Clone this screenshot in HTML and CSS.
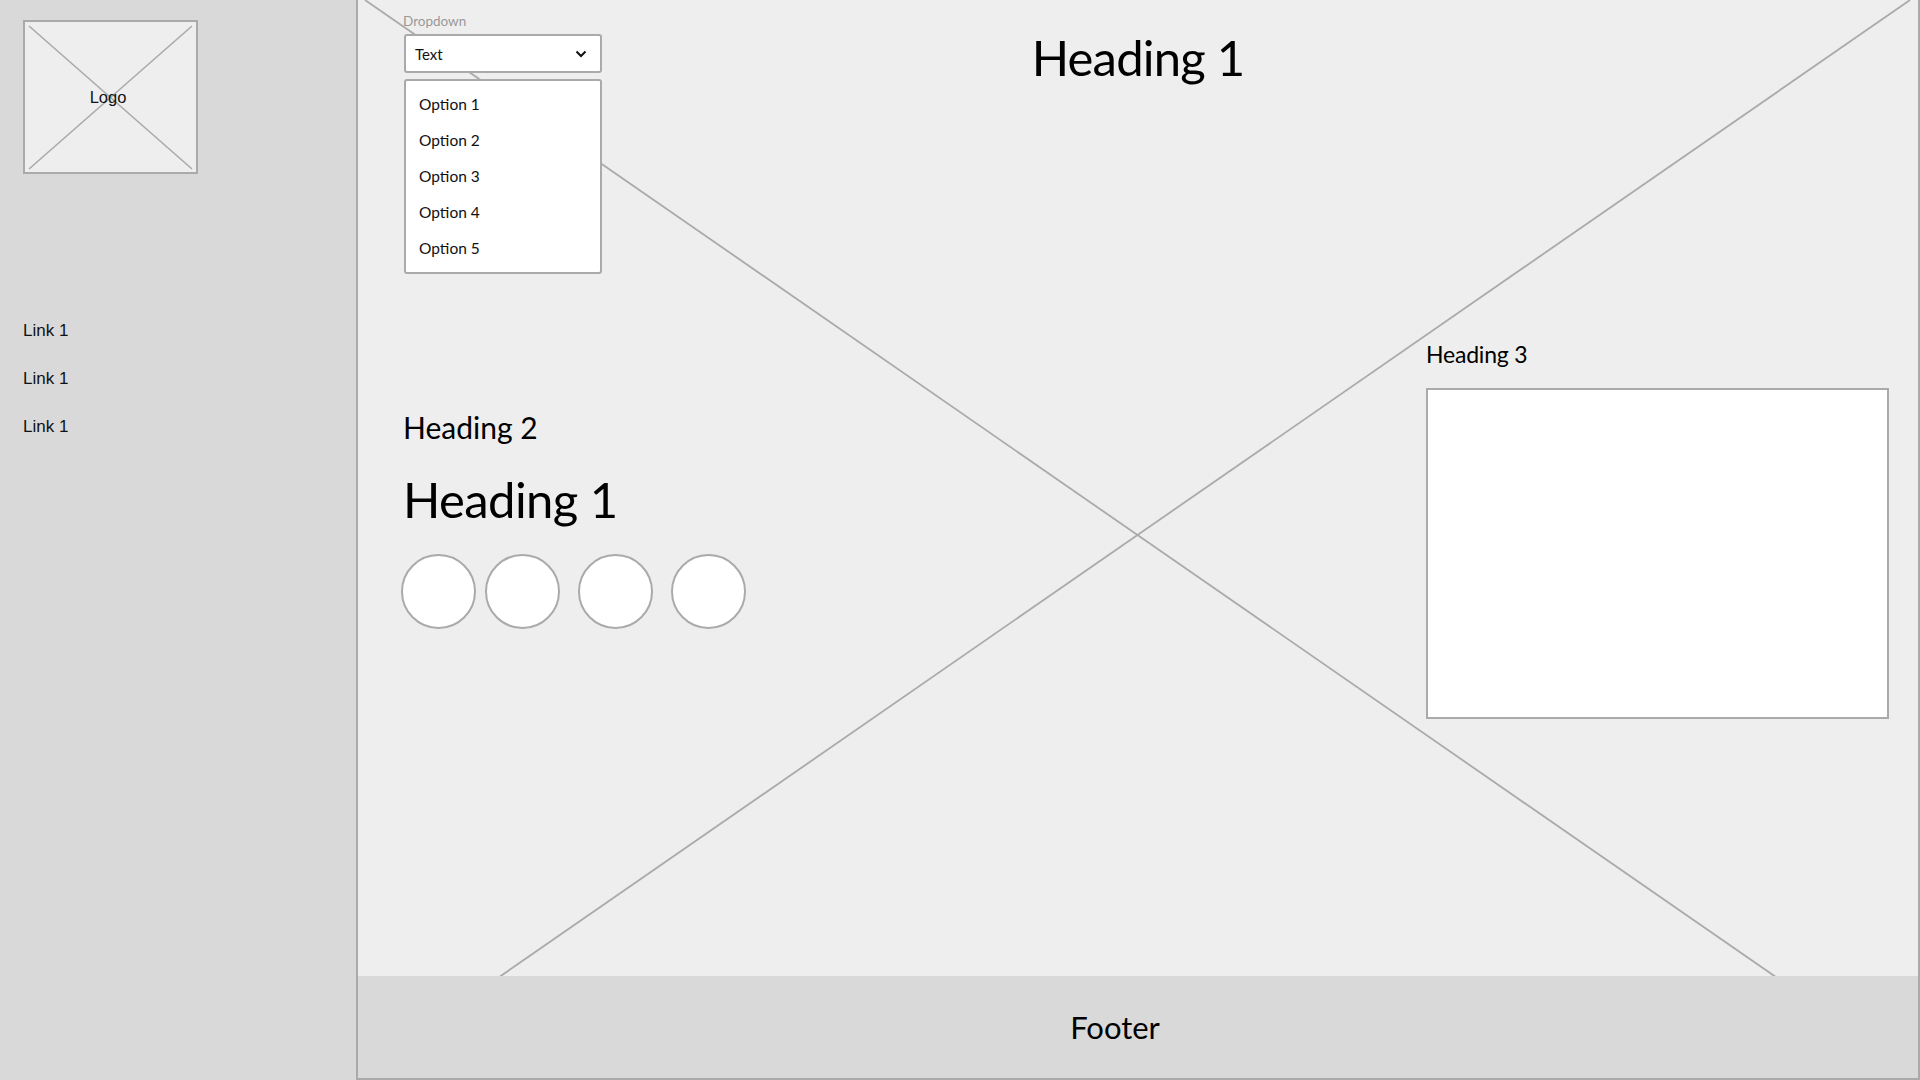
FILE: index.html
```html
<!DOCTYPE html>
<html lang="en">
<head>
<meta charset="utf-8">
<title>Wireframe</title>
<link rel="stylesheet" href="styles.css">
</head>
<body>
<div class="app">
  <aside class="sidebar">
    <div class="logo">
      <svg class="logo-x" width="171" height="150" viewBox="0 0 171 150">
        <line x1="4" y1="4" x2="167" y2="147"/>
        <line x1="167" y1="4" x2="4" y2="147"/>
      </svg>
      <span class="logo-text">Logo</span>
    </div>
    <nav class="links">
      <a class="link">Link 1</a>
      <a class="link">Link 1</a>
      <a class="link">Link 1</a>
    </nav>
  </aside>
  <main class="main">
    <svg class="placeholder" width="1560" height="1078" viewBox="0 0 1560 1078">
      <line x1="7" y1="0" x2="1552" y2="1070"/>
      <line x1="1552" y1="0" x2="7" y2="1070"/>
    </svg>
    <div class="content">
      <div class="top-row">
        <div class="dropdown">
          <div class="dd-label">Dropdown</div>
          <div class="select">
            <span class="select-text">Text</span>
            <svg class="chev" width="12" height="8" viewBox="0 0 12 8"><polyline points="1.5,1.5 6,6 10.5,1.5"/></svg>
          </div>
          <ul class="menu">
            <li class="option">Option 1</li>
            <li class="option">Option 2</li>
            <li class="option">Option 3</li>
            <li class="option">Option 4</li>
            <li class="option">Option 5</li>
          </ul>
        </div>
        <h1 class="title">Heading 1</h1>
        <div class="spacer"></div>
      </div>
      <div class="lower">
        <div class="left-col">
          <h2 class="h2">Heading 2</h2>
          <h1 class="h1">Heading 1</h1>
          <div class="circles">
            <span class="circle first"></span>
            <span class="circle"></span>
            <span class="circle"></span>
            <span class="circle"></span>
          </div>
        </div>
        <div class="right-col">
          <h3 class="h3">Heading 3</h3>
          <div class="panel"></div>
        </div>
      </div>
    </div>
    <footer class="footer">Footer</footer>
  </main>
</div>
</body>
</html>
```

FILE: styles.css
```css
* { box-sizing: border-box; }
html, body { margin: 0; padding: 0; }
body {
  width: 1920px;
  height: 1080px;
  overflow: hidden;
  font-family: Lato, "Open Sans", sans-serif;
  color: #111;
  background: #eeeeee;
}
.app {
  display: flex;
  height: 1080px;
}
.sidebar {
  width: 356px;
  flex: none;
  background: #d9d9d9;
  padding: 20px 0 0 23px;
  font-family: "Liberation Sans", Arial, sans-serif;
}
.logo {
  position: relative;
  width: 175px;
  height: 154px;
  border: 2px solid #aaaaaa;
  background: #eeeeee;
  display: flex;
  align-items: center;
  justify-content: center;
}
.logo-x {
  position: absolute;
  left: 0;
  top: 0;
}
.logo-x line {
  stroke: #aaaaaa;
  stroke-width: 1.6;
}
.logo-text {
  position: relative;
  font-size: 16.5px;
  color: #111;
  margin-right: 5px;
}
.links {
  display: flex;
  flex-direction: column;
  margin-top: 133px;
}
.link {
  font-size: 17px;
  line-height: 48px;
  color: #111;
}
.main {
  position: relative;
  flex: 1;
  display: flex;
  flex-direction: column;
  background: #eeeeee;
  border-left: 2px solid #aaaaaa;
  border-right: 2px solid #aaaaaa;
  border-bottom: 2px solid #aaaaaa;
}
.placeholder {
  position: absolute;
  left: 0;
  top: 0;
}
.placeholder line {
  stroke: #aaaaaa;
  stroke-width: 1.8;
}
.content {
  position: relative;
  flex: 1;
  padding-top: 13px;
}
.top-row {
  display: grid;
  grid-template-columns: 1fr auto 1fr;
  padding: 0 46px;
}
.dropdown {
  width: 198px;
}
.dd-label {
  font-size: 13.5px;
  line-height: 16px;
  color: #999999;
  margin-left: -1px;
}
.select {
  margin-top: 5px;
  height: 39px;
  background: #ffffff;
  border: 2px solid #aaaaaa;
  border-radius: 3px;
  display: flex;
  align-items: center;
  justify-content: space-between;
  padding: 0 13px 0 9px;
}
.select-text {
  font-size: 15px;
  color: #111;
}
.chev polyline {
  fill: none;
  stroke: #111;
  stroke-width: 2;
}
.menu {
  list-style: none;
  margin: 6px 0 0;
  padding: 5px 0 6px 13px;
  background: #ffffff;
  border: 2px solid #aaaaaa;
  border-radius: 3px;
}
.option {
  font-size: 15.5px;
  line-height: 36px;
  color: #111;
}
.title {
  margin: 14px 0 0;
  font-size: 49px;
  line-height: 60px;
  letter-spacing: -0.8px;
  font-weight: 400;
  color: #000;
}
.lower {
  display: flex;
  justify-content: space-between;
  align-items: flex-start;
  padding: 0 29px 0 45px;
}
.left-col {
  margin-top: 136px;
}
.h2 {
  margin: 0;
  font-size: 30px;
  line-height: 35px;
  font-weight: 400;
  color: #000;
}
.h1 {
  margin: 24px 0 0;
  font-size: 49px;
  line-height: 60px;
  letter-spacing: -0.6px;
  font-weight: 400;
  color: #000;
}
.circles {
  display: flex;
  gap: 18px;
  margin: 25px 0 0 -2px;
}
.circle {
  width: 75px;
  height: 75px;
  border-radius: 50%;
  border: 2px solid #aaaaaa;
  background: #ffffff;
}
.circle.first {
  margin-right: -9px;
}
.right-col {
  margin-top: 66px;
  width: 463px;
}
.h3 {
  margin: 0;
  font-size: 23px;
  line-height: 28px;
  letter-spacing: -0.2px;
  font-weight: 400;
  color: #000;
}
.panel {
  margin-top: 20px;
  height: 331px;
  background: #ffffff;
  border: 2px solid #aaaaaa;
}
.footer {
  position: relative;
  height: 102px;
  flex: none;
  background: #d9d9d9;
  display: flex;
  align-items: center;
  justify-content: center;
  padding-right: 46px;
  font-size: 31px;
  color: #000;
}
```
